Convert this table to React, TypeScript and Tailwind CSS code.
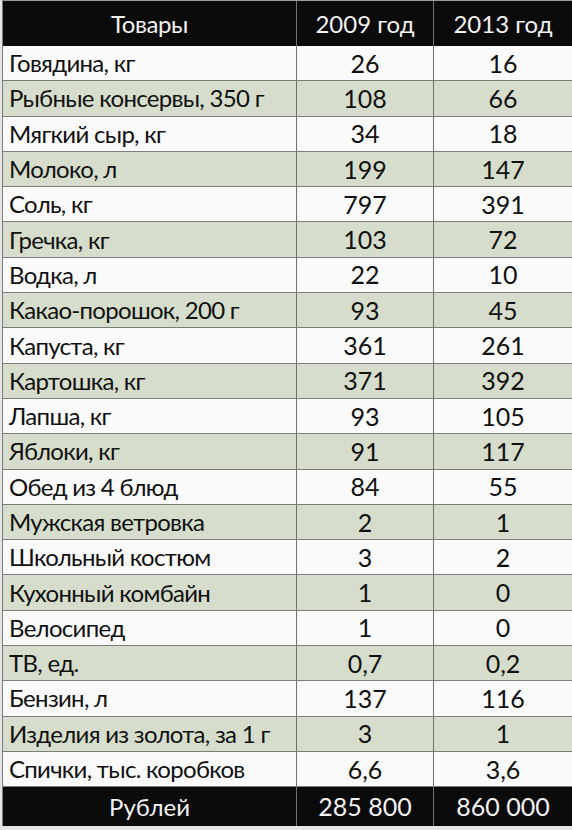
const rows: [string, string, string][] = [
  ["Говядина, кг", "26", "16"],
  ["Рыбные консервы, 350 г", "108", "66"],
  ["Мягкий сыр, кг", "34", "18"],
  ["Молоко, л", "199", "147"],
  ["Соль, кг", "797", "391"],
  ["Гречка, кг", "103", "72"],
  ["Водка, л", "22", "10"],
  ["Какао-порошок, 200 г", "93", "45"],
  ["Капуста, кг", "361", "261"],
  ["Картошка, кг", "371", "392"],
  ["Лапша, кг", "93", "105"],
  ["Яблоки, кг", "91", "117"],
  ["Обед из 4 блюд", "84", "55"],
  ["Мужская ветровка", "2", "1"],
  ["Школьный костюм", "3", "2"],
  ["Кухонный комбайн", "1", "0"],
  ["Велосипед", "1", "0"],
  ["ТВ, ед.", "0,7", "0,2"],
  ["Бензин, л", "137", "116"],
  ["Изделия из золота, за 1 г", "3", "1"],
  ["Спички, тыс. коробков", "6,6", "3,6"],
]

export default function App() {
  return (
    <div className="w-[572px] h-[830px] bg-[#e4e4e4] pl-[2px] font-['Lato','Liberation_Sans',sans-serif] text-[24px] leading-none text-[#111]">
      <div className="flex flex-col w-[570px] border-l border-[#7d7d7d]">
        {/* Header */}
        <div className="flex h-[46px] bg-[#0b0b0b] text-[#f2f2f2] border-t border-[#9a9a9a]">
          <div className="w-[294px] flex items-center justify-center border-r border-[#6f6f6f] tracking-[-0.4px]">Товары</div>
          <div className="w-[137px] flex items-center justify-center border-r border-[#6f6f6f]">2009 год</div>
          <div className="flex-1 flex items-center justify-center">2013 год</div>
        </div>

        {rows.map(([name, a, b], i) => (
          <div
            key={name}
            className={
              "flex h-[35.3px] border-b border-[#7d7d7d] " +
              (i % 2 === 0 ? "bg-[#fafafa]" : "bg-[#d6ddcc]")
            }
          >
            <div className="w-[294px] flex items-center pl-[6px] border-r border-[#6f6f6f] tracking-[-0.7px]">{name}</div>
            <div className="w-[137px] flex items-center justify-center border-r border-[#6f6f6f] text-[25px]">{a}</div>
            <div className="flex-1 flex items-center justify-center text-[25px]">{b}</div>
          </div>
        ))}

        {/* Footer */}
        <div className="flex h-[39px] bg-[#0b0b0b] text-[#f2f2f2]">
          <div className="w-[294px] flex items-center justify-center border-r border-[#6f6f6f]">Рублей</div>
          <div className="w-[137px] flex items-center justify-center border-r border-[#6f6f6f] text-[25px]">285 800</div>
          <div className="flex-1 flex items-center justify-center text-[25px]">860 000</div>
        </div>
      </div>
    </div>
  )
}
